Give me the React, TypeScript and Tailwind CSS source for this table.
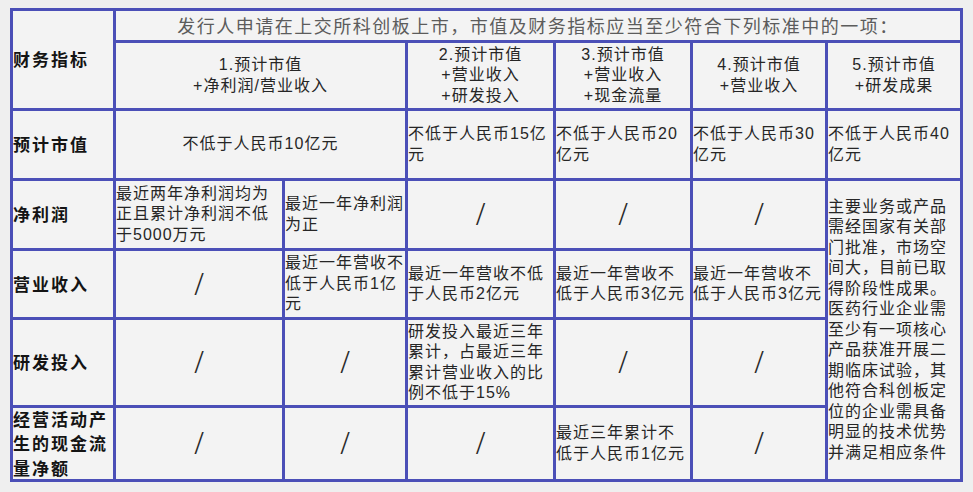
const sans = "font-['Liberation_Sans','Noto_Sans_CJK_SC',sans-serif]";
const cjk = "font-['Noto_Sans_CJK_SC',sans-serif]";

function Cell({
  lines,
  center = false,
  className = "",
}: {
  lines: string[];
  center?: boolean;
  className?: string;
}) {
  return (
    <div
      className={`flex flex-col justify-center bg-[#f3f3f3] ${sans} text-[16px] leading-[20.5px] tracking-[1px] text-[#262626] whitespace-nowrap overflow-visible ${
        center ? "items-center text-center" : "items-start"
      } ${className}`}
    >
      {lines.map((l, i) => (
        <div key={i}>{l}</div>
      ))}
    </div>
  );
}

function Label({ lines, className = "" }: { lines: string[]; className?: string }) {
  return (
    <div
      className={`flex flex-col justify-center bg-[#f3f3f3] ${cjk} text-[17px] font-bold leading-[24.5px] tracking-[2px] text-[#141414] ${className}`}
    >
      {lines.map((l, i) => (
        <div key={i}>{l}</div>
      ))}
    </div>
  );
}

function Slash() {
  return (
    <div className="flex items-center justify-center bg-[#f3f3f3]">
      <span className="font-['Liberation_Serif',serif] text-[33px] leading-none text-[#2a2a2a]">/</span>
    </div>
  );
}

export default function App() {
  return (
    <div className="min-h-screen bg-[#efefef] pl-[10px] pt-[8px]">
      <div className="grid w-fit grid-cols-[100px_166px_120px_145px_134px_132px_132px] grid-rows-[29px_65px_67px_67px_66px_85px_71px] gap-[3px] bg-[#4b4fb7] p-[3px]">
        {/* header */}
        <Label lines={["财务指标"]} className="row-span-2" />
        <div
          className={`col-span-6 flex items-center justify-center bg-[#f3f3f3] ${cjk} text-[18px] tracking-[1.5px] text-[#5c5c5c]`}
        >
          发行人申请在上交所科创板上市，市值及财务指标应当至少符合下列标准中的一项：
        </div>
        <Cell center className="col-span-2" lines={["1.预计市值", "+净利润/营业收入"]} />
        <Cell center lines={["2.预计市值", "+营业收入", "+研发投入"]} />
        <Cell center lines={["3.预计市值", "+营业收入", "+现金流量"]} />
        <Cell center lines={["4.预计市值", "+营业收入"]} />
        <Cell center lines={["5.预计市值", "+研发成果"]} />

        {/* 预计市值 */}
        <Label lines={["预计市值"]} />
        <Cell center className="col-span-2" lines={["不低于人民币10亿元"]} />
        <Cell lines={["不低于人民币15亿", "元"]} />
        <Cell lines={["不低于人民币20", "亿元"]} />
        <Cell lines={["不低于人民币30", "亿元"]} />
        <Cell lines={["不低于人民币40", "亿元"]} />

        {/* 净利润 */}
        <Label lines={["净利润"]} />
        <Cell lines={["最近两年净利润均为", "正且累计净利润不低", "于5000万元"]} />
        <Cell lines={["最近一年净利润", "为正"]} />
        <Slash />
        <Slash />
        <Slash />
        <Cell
          className="row-span-4"
          lines={[
            "主要业务或产品",
            "需经国家有关部",
            "门批准，市场空",
            "间大，目前已取",
            "得阶段性成果。",
            "医药行业企业需",
            "至少有一项核心",
            "产品获准开展二",
            "期临床试验，其",
            "他符合科创板定",
            "位的企业需具备",
            "明显的技术优势",
            "并满足相应条件",
          ]}
        />

        {/* 营业收入 */}
        <Label lines={["营业收入"]} />
        <Slash />
        <Cell lines={["最近一年营收不", "低于人民币1亿", "元"]} />
        <Cell lines={["最近一年营收不低", "于人民币2亿元"]} />
        <Cell lines={["最近一年营收不", "低于人民币3亿元"]} />
        <Cell lines={["最近一年营收不", "低于人民币3亿元"]} />

        {/* 研发投入 */}
        <Label lines={["研发投入"]} />
        <Slash />
        <Slash />
        <Cell lines={["研发投入最近三年", "累计，占最近三年", "累计营业收入的比", "例不低于15%"]} />
        <Slash />
        <Slash />

        {/* 现金流量 */}
        <Label lines={["经营活动产", "生的现金流", "量净额"]} />
        <Slash />
        <Slash />
        <Slash />
        <Cell lines={["最近三年累计不", "低于人民币1亿元"]} />
        <Slash />
      </div>
    </div>
  );
}
